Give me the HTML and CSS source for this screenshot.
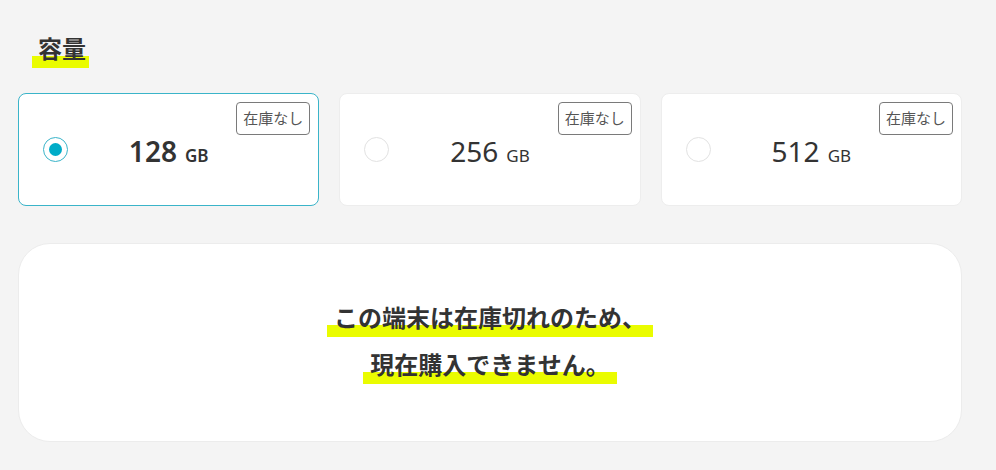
FILE: index.html
```html
<!DOCTYPE html>
<html lang="ja">
<head>
    <meta charset="UTF-8">
    <meta name="viewport" content="width=device-width, initial-scale=1.0">
    <title>容量</title>
    <link rel="stylesheet" href="styles.css">
</head>
<body>
    <div class="container">
        <h2 class="section-title"><span class="marker">容量</span></h2>

        <div class="capacity-list">
            <label class="capacity-card selected">
                <span class="radio"></span>
                <span class="capacity"><span class="num">128</span><span class="unit">GB</span></span>
                <span class="badge">在庫なし</span>
            </label>
            <label class="capacity-card">
                <span class="radio"></span>
                <span class="capacity"><span class="num">256</span><span class="unit">GB</span></span>
                <span class="badge">在庫なし</span>
            </label>
            <label class="capacity-card">
                <span class="radio"></span>
                <span class="capacity"><span class="num">512</span><span class="unit">GB</span></span>
                <span class="badge">在庫なし</span>
            </label>
        </div>

        <div class="notice">
            <p class="notice-line"><span class="marker">この端末は在庫切れのため、</span></p>
            <p class="notice-line"><span class="marker">現在購入できません。</span></p>
        </div>
    </div>
</body>
</html>
```

FILE: styles.css
```css
body {
    margin: 0;
    padding: 0;
    background: #f4f4f4;
    color: #333;
    font-family: "Noto Sans", "Noto Sans CJK JP", sans-serif;
}
.container {
    width: 944px;
    margin-left: 18px;
    padding-top: 37px;
}
.marker {
    display: inline-block;
    line-height: 24px;
    padding: 0 7px 7px;
    background: linear-gradient(transparent 61%, #eafc00 61%);
}
.section-title {
    margin: 0 0 25px 14px;
    font-size: 24px;
    font-weight: bold;
    line-height: 24px;
    color: #333;
}
.section-title .marker {
    padding: 0 3px 7px 6px;
}
.capacity-list {
    display: grid;
    grid-template-columns: repeat(3, 1fr);
    gap: 20px;
}
.capacity-card {
    position: relative;
    display: flex;
    align-items: center;
    justify-content: center;
    height: 113px;
    box-sizing: border-box;
    border: 1px solid #ededed;
    border-radius: 8px;
    background: #fff;
}
.capacity-card.selected {
    border-color: #3ab4c9;
}
.radio {
    position: absolute;
    left: 24px;
    top: 43px;
    width: 25px;
    height: 25px;
    box-sizing: border-box;
    border: 1px solid #e2e2e2;
    border-radius: 50%;
}
.selected .radio {
    border: 1.5px solid #3ab4c9;
}
.selected .radio::after {
    content: "";
    position: absolute;
    left: 4.5px;
    top: 4.5px;
    width: 13px;
    height: 13px;
    border-radius: 50%;
    background: #00acc8;
}
.capacity {
    display: flex;
    align-items: baseline;
    gap: 8px;
    margin-top: 3px;
    color: #333;
}
.capacity .num {
    font-size: 28px;
}
.selected .capacity .num {
    font-weight: 600;
}
.capacity .unit {
    font-size: 17px;
}
.selected .capacity .unit {
    font-weight: 600;
}
.badge {
    position: absolute;
    top: 8px;
    right: 8px;
    padding: 0 6px;
    border: 1px solid #7a7a7a;
    border-radius: 4px;
    font-size: 15px;
    line-height: 31px;
    color: #555;
}
.notice {
    display: flex;
    flex-direction: column;
    align-items: center;
    justify-content: center;
    gap: 11px;
    height: 199px;
    margin-top: 37px;
    box-sizing: border-box;
    border: 1px solid #ececec;
    border-radius: 32px;
    background: #fff;
}
.notice-line {
    margin: 0;
    font-size: 24px;
    font-weight: bold;
    color: #333;
}
```
